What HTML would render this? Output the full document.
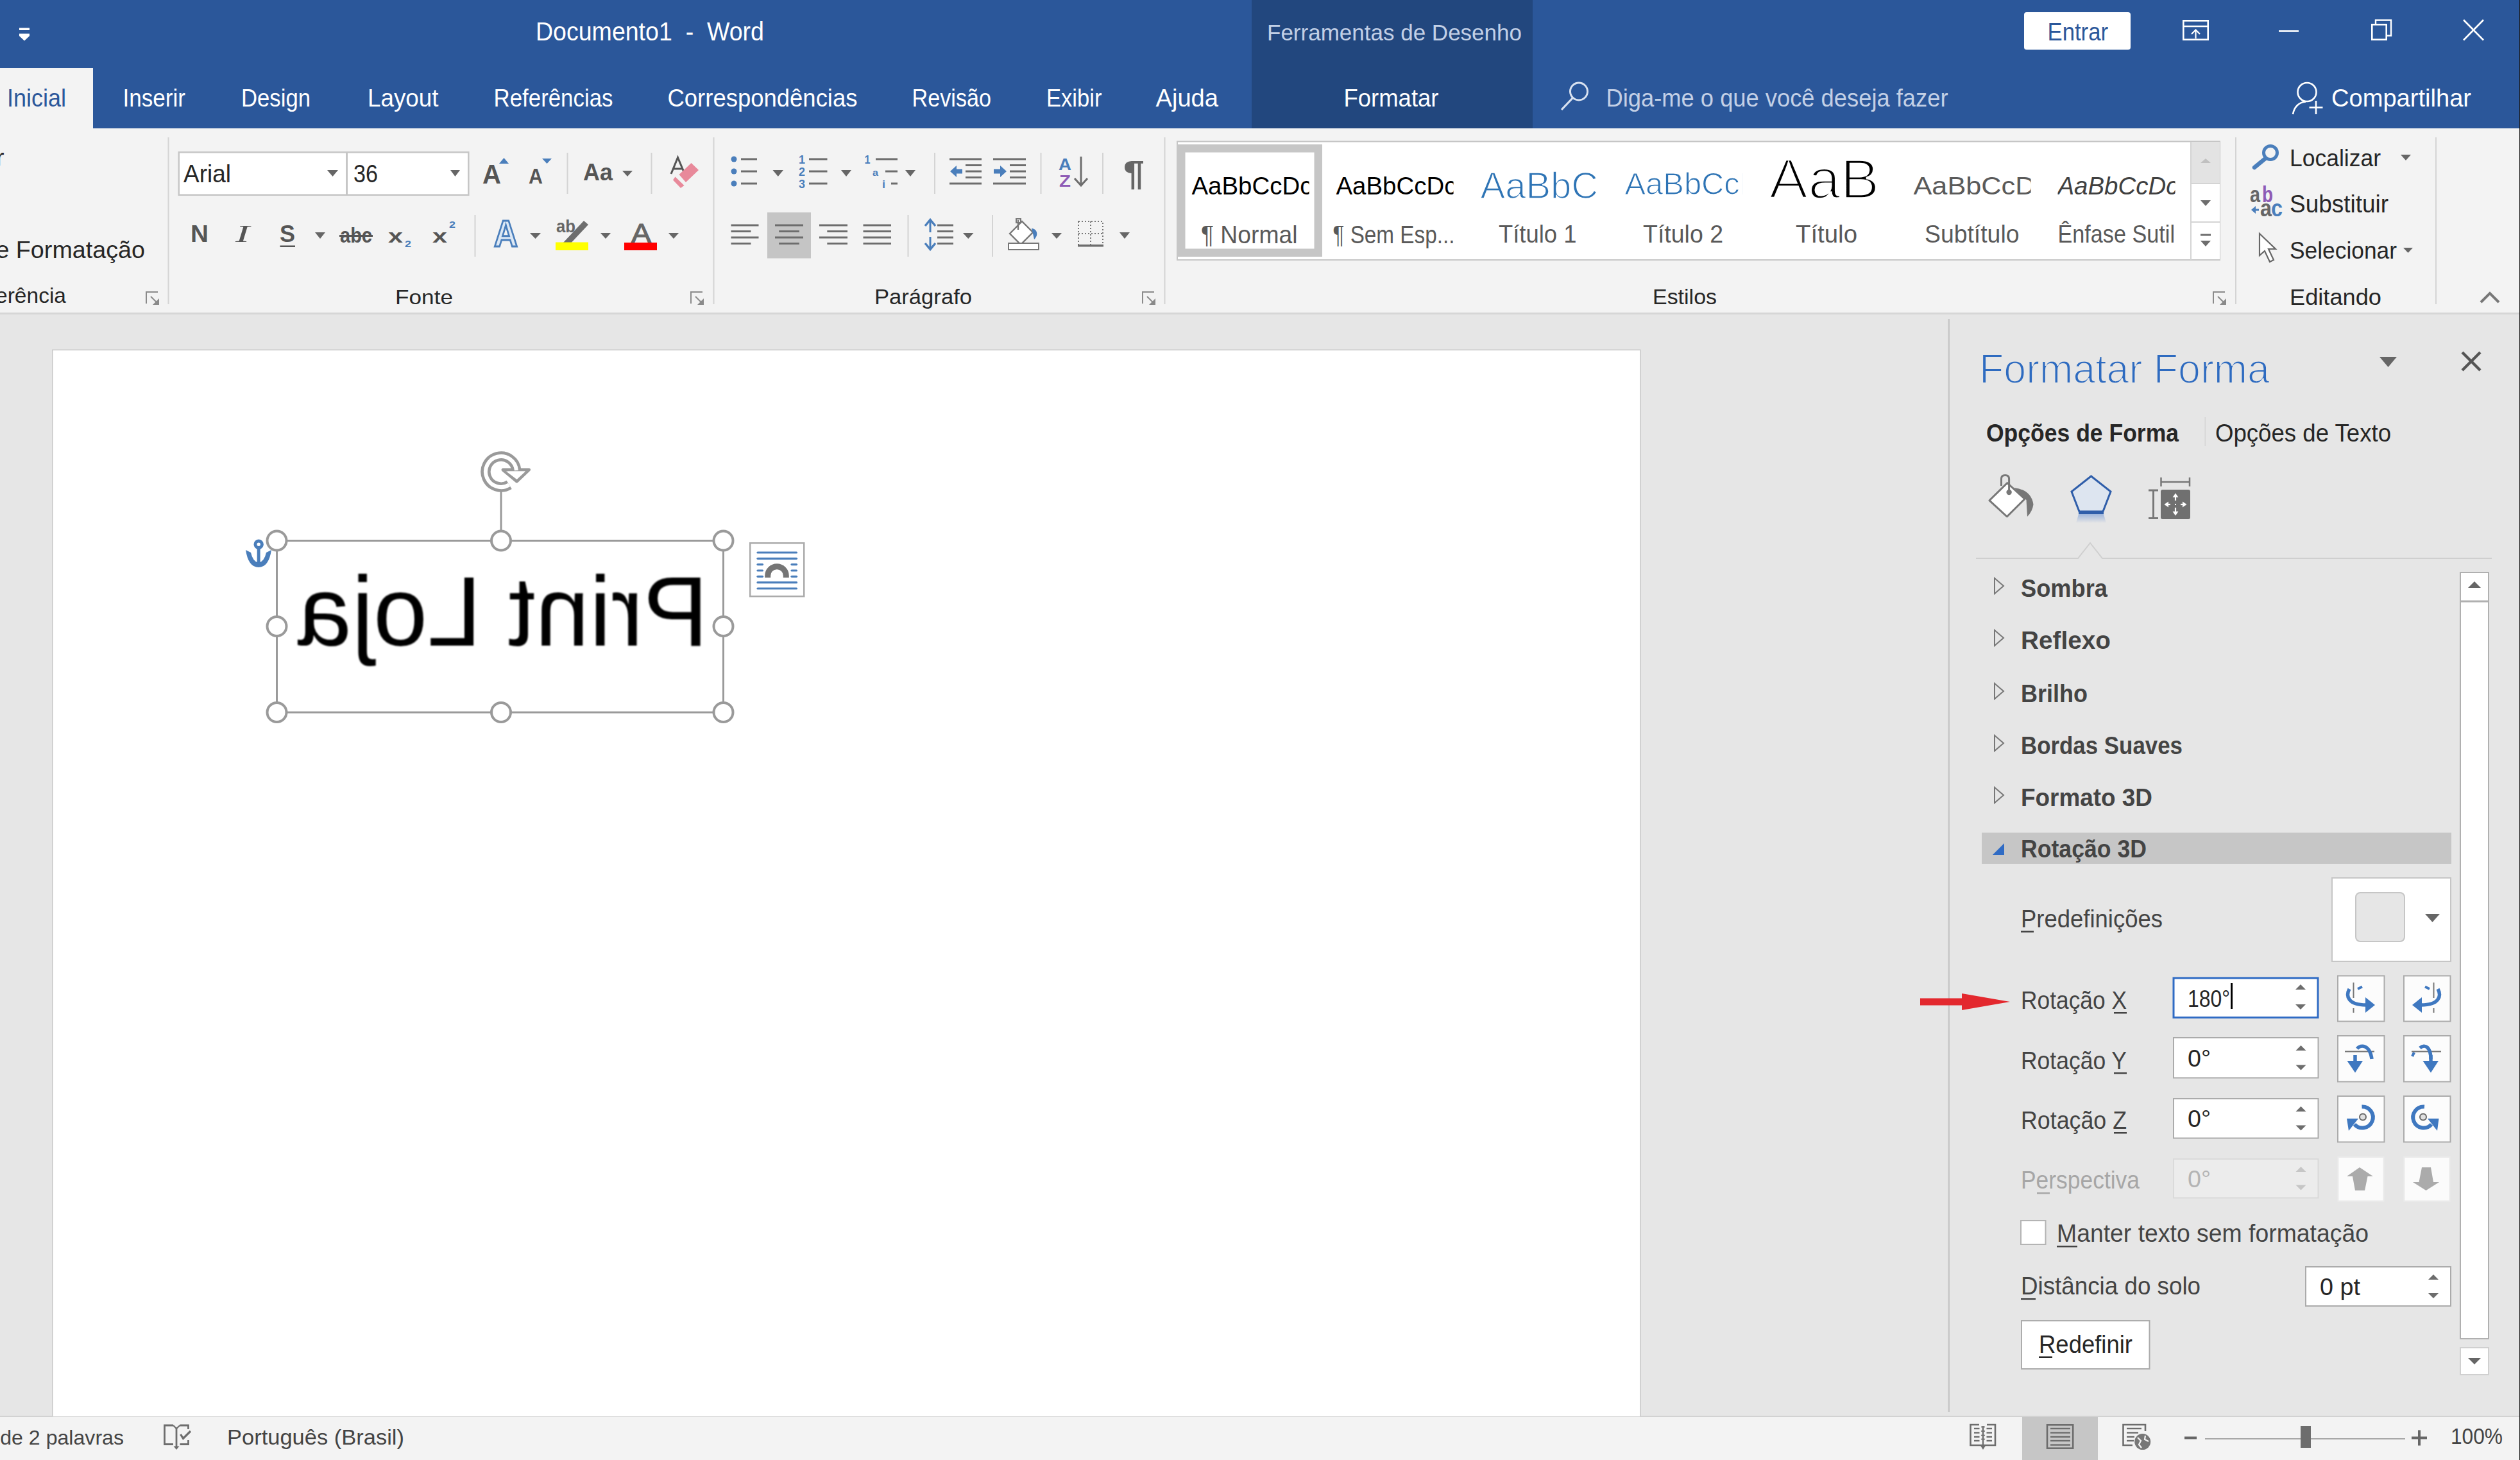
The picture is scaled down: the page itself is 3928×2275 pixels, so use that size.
<!DOCTYPE html>
<html><head><meta charset="utf-8"><title>Documento1 - Word</title>
<style>
html,body{margin:0;padding:0;width:3928px;height:2275px;overflow:hidden;background:#e6e6e6;}
svg{display:block;font-family:"Liberation Sans", sans-serif;}
</style></head><body>
<svg width="3928" height="2275" viewBox="0 0 3928 2275">
<defs>
<filter id="blur1" x="-5%" y="-5%" width="110%" height="110%"><feGaussianBlur stdDeviation="1.2"/></filter>
</defs>
<rect x="0" y="0" width="3928" height="200" fill="#2b579a" />
<rect x="1951" y="0" width="438" height="200" fill="#22477e" />
<rect x="0" y="106" width="145" height="94" fill="#f3f3f3" />
<rect x="0" y="200" width="3928" height="288" fill="#f3f3f3" />
<rect x="0" y="487" width="3928" height="3" fill="#d6d6d6" />
<rect x="0" y="490" width="3928" height="1717" fill="#e6e6e6" />
<rect x="0" y="2207" width="3928" height="68" fill="#f3f3f3" />
<rect x="0" y="2206" width="3928" height="2" fill="#d2d2d2" />
<rect x="30" y="43.5" width="16" height="3.5" fill="#ffffff" />
<rect x="30" y="52.5" width="16" height="3.5" fill="#ffffff" />
<path d="M30,56 L46,56 L38,63.5 Z" fill="#ffffff" />
<text x="835.0" y="63.0" font-size="39.80" fill="#ffffff" textLength="356.0" lengthAdjust="spacingAndGlyphs">Documento1  -  Word</text>
<text x="1975.0" y="62.5" font-size="34.92" fill="#c3d0e6" textLength="397.0" lengthAdjust="spacingAndGlyphs">Ferramentas de Desenho</text>
<rect x="3155" y="19" width="166" height="58.5" rx="4" fill="#ffffff"/>
<text x="3191.5" y="62.5" font-size="38.41" fill="#2b579a" textLength="94.5" lengthAdjust="spacingAndGlyphs">Entrar</text>
<rect x="3403.3" y="32.3" width="38.4" height="29.4" fill="none" stroke="#ffffff" stroke-width="2.6" />
<line x1="3403" y1="41" x2="3442" y2="41" stroke="#ffffff" stroke-width="2.6" />
<line x1="3422.5" y1="60" x2="3422.5" y2="47" stroke="#ffffff" stroke-width="2.2" />
<path d="M3416,53 L3422.5,46.5 L3429,53" fill="none" stroke="#ffffff" stroke-width="2.2" />
<line x1="3552" y1="48.5" x2="3583" y2="48.5" stroke="#ffffff" stroke-width="2.6" />
<path d="M3703,37 L3703,31.5 L3727,31.5 L3727,55.5 L3720.5,55.5" fill="none" stroke="#ffffff" stroke-width="2.4" />
<rect x="3697.3" y="38.3" width="22.4" height="23.4" fill="none" stroke="#ffffff" stroke-width="2.6" />
<line x1="3840" y1="31" x2="3871" y2="62.5" stroke="#ffffff" stroke-width="2.6" />
<line x1="3871" y1="31" x2="3840" y2="62.5" stroke="#ffffff" stroke-width="2.6" />
<text x="11.0" y="165.6" font-size="39.11" fill="#2b579a" textLength="92.0" lengthAdjust="spacingAndGlyphs">Inicial</text>
<text x="191.5" y="165.6" font-size="39.11" fill="#ffffff" textLength="97.5" lengthAdjust="spacingAndGlyphs">Inserir</text>
<text x="376.0" y="165.6" font-size="39.11" fill="#ffffff" textLength="108.0" lengthAdjust="spacingAndGlyphs">Design</text>
<text x="573.0" y="165.6" font-size="39.11" fill="#ffffff" textLength="110.5" lengthAdjust="spacingAndGlyphs">Layout</text>
<text x="769.5" y="165.6" font-size="39.11" fill="#ffffff" textLength="186.0" lengthAdjust="spacingAndGlyphs">Referências</text>
<text x="1040.5" y="165.6" font-size="39.11" fill="#ffffff" textLength="296.0" lengthAdjust="spacingAndGlyphs">Correspondências</text>
<text x="1421.5" y="165.6" font-size="39.11" fill="#ffffff" textLength="123.5" lengthAdjust="spacingAndGlyphs">Revisão</text>
<text x="1631.0" y="165.6" font-size="39.11" fill="#ffffff" textLength="86.5" lengthAdjust="spacingAndGlyphs">Exibir</text>
<text x="1801.5" y="165.6" font-size="39.11" fill="#ffffff" textLength="97.5" lengthAdjust="spacingAndGlyphs">Ajuda</text>
<text x="2094.5" y="165.6" font-size="39.11" fill="#ffffff" textLength="148.0" lengthAdjust="spacingAndGlyphs">Formatar</text>
<circle cx="2461" cy="142.5" r="13.5" fill="none" stroke="#d9e2f0" stroke-width="3"/>
<line x1="2452" y1="152" x2="2434" y2="171" stroke="#d9e2f0" stroke-width="3.2" />
<text x="2503.5" y="165.6" font-size="39.11" fill="#c3d0e6" textLength="533.0" lengthAdjust="spacingAndGlyphs">Diga-me o que você deseja fazer</text>
<circle cx="3596" cy="143.5" r="14.5" fill="none" stroke="#ffffff" stroke-width="2.6"/>
<path d="M3574,178 C3576,166 3584,159 3594,158.5" fill="none" stroke="#ffffff" stroke-width="2.6" />
<line x1="3610" y1="157" x2="3610" y2="178" stroke="#ffffff" stroke-width="2.6" />
<line x1="3599.5" y1="167.5" x2="3620.5" y2="167.5" stroke="#ffffff" stroke-width="2.6" />
<text x="3634.0" y="165.7" font-size="39.11" fill="#ffffff" textLength="218.0" lengthAdjust="spacingAndGlyphs">Compartilhar</text>
<text x="-6.0" y="257.5" font-size="37.71" fill="#262626">r</text>
<text x="226.0" y="402.0" font-size="37.71" fill="#262626" text-anchor="end">de Formatação</text>
<text x="103.0" y="472.0" font-size="33.52" fill="#262626" text-anchor="end">Área de Transferência</text>
<path d="M228,473 L228,455 L246,455" fill="none" stroke="#8a8a8a" stroke-width="2" />
<path d="M235,462 L247,474" fill="none" stroke="#8a8a8a" stroke-width="2" />
<path d="M248,465 L248,475 L238,475 Z" fill="#8a8a8a" />
<rect x="261.5" y="214" width="2.0" height="260" fill="#d4d4d4" />
<rect x="278.75" y="237.25" width="261.5" height="66.5" fill="#ffffff" stroke="#c6c6c6" stroke-width="2.5" />
<rect x="540.75" y="237.25" width="189.5" height="66.5" fill="#ffffff" stroke="#c6c6c6" stroke-width="2.5" />
<text x="286.0" y="284.0" font-size="39.11" fill="#262626" textLength="74.0" lengthAdjust="spacingAndGlyphs">Arial</text>
<path d="M510,265 L527,265 L518.5,275 Z" fill="#666" />
<text x="551.0" y="284.0" font-size="39.11" fill="#262626" textLength="38.0" lengthAdjust="spacingAndGlyphs">36</text>
<path d="M702,265 L717,265 L709.5,275 Z" fill="#666" />
<text x="752.0" y="286.0" font-size="41.90" fill="#555" font-weight="700" textLength="29.0" lengthAdjust="spacingAndGlyphs">A</text>
<path d="M778,255 L793,255 L785.5,246 Z" fill="#4a7ebb" />
<text x="824.0" y="286.0" font-size="32.82" fill="#555" font-weight="700" textLength="22.0" lengthAdjust="spacingAndGlyphs">A</text>
<path d="M845,247 L860,247 L852.5,255 Z" fill="#4a7ebb" />
<rect x="883.5" y="238" width="2.0" height="64" fill="#d4d4d4" />
<text x="909.0" y="281.0" font-size="37.71" fill="#555" font-weight="700" textLength="46.0" lengthAdjust="spacingAndGlyphs">Aa</text>
<path d="M970,266 L986,266 L978.0,275 Z" fill="#666" />
<rect x="1014.5" y="238" width="2.0" height="64" fill="#d4d4d4" />
<path d="M1046,271 L1056.5,245.5 L1066,268 M1050,263 L1063,263" fill="none" stroke="#555" stroke-width="3" />
<path d="M1077.5,254 L1089,265 L1069,284 L1058.5,272 Z" fill="#e8899a" />
<path d="M1052.5,275.5 L1066.5,289 L1061,293 L1049,280.5 Z" fill="#e8899a" />
<text x="297.0" y="377.0" font-size="37.71" fill="#555" font-weight="700" textLength="28.0" lengthAdjust="spacingAndGlyphs">N</text>
<text x="367" y="377" font-size="38" fill="#555" font-family="Liberation Serif" font-style="italic" textLength="22" lengthAdjust="spacingAndGlyphs">I</text>
<text x="436.0" y="377.0" font-size="37.71" fill="#555" font-weight="700" textLength="24.0" lengthAdjust="spacingAndGlyphs">S</text>
<rect x="436.5" y="382.5" width="23.5" height="2.5" fill="#555" />
<path d="M491,362 L507,362 L499.0,372 Z" fill="#666" />
<text x="530.0" y="378.0" font-size="33.52" fill="#555" font-weight="700" textLength="50.0" lengthAdjust="spacingAndGlyphs">abc</text>
<rect x="529" y="366" width="52" height="3" fill="#555" />
<text x="605.0" y="378.0" font-size="29.33" fill="#555" font-weight="700" textLength="23.0" lengthAdjust="spacingAndGlyphs">x</text>
<text x="631.0" y="385.0" font-size="15.36" fill="#4a7ebb" font-weight="700" textLength="10.0" lengthAdjust="spacingAndGlyphs">2</text>
<text x="674.0" y="378.0" font-size="29.33" fill="#555" font-weight="700" textLength="23.0" lengthAdjust="spacingAndGlyphs">x</text>
<text x="700.0" y="355.0" font-size="15.36" fill="#4a7ebb" font-weight="700" textLength="10.0" lengthAdjust="spacingAndGlyphs">2</text>
<rect x="739.5" y="335" width="2.0" height="65" fill="#d4d4d4" />
<text x="770" y="384" font-size="58" fill="#dce8f5" stroke="#4a7ebb" stroke-width="3" font-weight="700" textLength="37" lengthAdjust="spacingAndGlyphs">A</text>
<path d="M826,363 L843,363 L834.5,372 Z" fill="#666" />
<text x="867.0" y="362.0" font-size="27.93" fill="#666" font-weight="700" textLength="30.0" lengthAdjust="spacingAndGlyphs">ab</text>
<path d="M878,378 L910,344 L917,350 L885,384 Z" fill="#6d6d6d" />
<rect x="866" y="377.5" width="51" height="12.5" fill="#ffff00" />
<path d="M936,363 L952,363 L944.0,372 Z" fill="#666" />
<text x="984.0" y="377.5" font-size="42.60" fill="#666" textLength="31.0" lengthAdjust="spacingAndGlyphs" stroke="#666" stroke-width="1.2">A</text>
<rect x="973" y="378" width="51" height="12" fill="#ff0000" />
<path d="M1042,363 L1058,363 L1050.0,372 Z" fill="#666" />
<text x="616.0" y="474.0" font-size="32.12" fill="#262626" textLength="90.0" lengthAdjust="spacingAndGlyphs">Fonte</text>
<path d="M1077,473 L1077,455 L1095,455" fill="none" stroke="#8a8a8a" stroke-width="2" />
<path d="M1084,462 L1096,474" fill="none" stroke="#8a8a8a" stroke-width="2" />
<path d="M1097,465 L1097,475 L1087,475 Z" fill="#8a8a8a" />
<rect x="1111.5" y="214" width="2.0" height="260" fill="#d4d4d4" />
<circle cx="1144" cy="248" r="4.5" fill="#4a7ebb"/>
<rect x="1155" y="246.5" width="25" height="3.0" fill="#6d6d6d" />
<circle cx="1144" cy="267" r="4.5" fill="#4a7ebb"/>
<rect x="1155" y="265.5" width="25" height="3.0" fill="#6d6d6d" />
<circle cx="1144" cy="286" r="4.5" fill="#4a7ebb"/>
<rect x="1155" y="284.5" width="25" height="3.0" fill="#6d6d6d" />
<path d="M1204.5,265 L1221,265 L1212.75,275 Z" fill="#666" />
<text x="1245.0" y="255.0" font-size="18.16" fill="#4a7ebb" font-weight="700" textLength="10.0" lengthAdjust="spacingAndGlyphs">1</text>
<rect x="1261" y="246.5" width="28.5" height="3.0" fill="#6d6d6d" />
<text x="1245.0" y="274.0" font-size="18.16" fill="#4a7ebb" font-weight="700" textLength="10.0" lengthAdjust="spacingAndGlyphs">2</text>
<rect x="1261" y="265.5" width="28.5" height="3.0" fill="#6d6d6d" />
<text x="1245.0" y="293.0" font-size="18.16" fill="#4a7ebb" font-weight="700" textLength="10.0" lengthAdjust="spacingAndGlyphs">3</text>
<rect x="1261" y="284.5" width="28.5" height="3.0" fill="#6d6d6d" />
<path d="M1311,265 L1327,265 L1319.0,275 Z" fill="#666" />
<text x="1347.5" y="255.0" font-size="18.16" fill="#4a7ebb" font-weight="700" textLength="9.0" lengthAdjust="spacingAndGlyphs">1</text>
<rect x="1365" y="246.5" width="34" height="3.0" fill="#6d6d6d" />
<text x="1360.0" y="274.0" font-size="13.97" fill="#4a7ebb" font-weight="700" textLength="9.0" lengthAdjust="spacingAndGlyphs">a</text>
<rect x="1380" y="265.5" width="19" height="3.0" fill="#6d6d6d" />
<text x="1375.0" y="293.0" font-size="16.76" fill="#4a7ebb" font-weight="700" textLength="5.0" lengthAdjust="spacingAndGlyphs">i</text>
<rect x="1389" y="284.5" width="10" height="3.0" fill="#6d6d6d" />
<path d="M1411,265 L1427,265 L1419.0,275 Z" fill="#666" />
<rect x="1456" y="238" width="2" height="64" fill="#d4d4d4" />
<rect x="1480" y="246.5" width="50" height="3.0" fill="#6d6d6d" />
<rect x="1505" y="256" width="25" height="3" fill="#6d6d6d" />
<rect x="1505" y="265.5" width="25" height="3.0" fill="#6d6d6d" />
<rect x="1505" y="275" width="25" height="3" fill="#6d6d6d" />
<rect x="1480" y="284.5" width="50" height="3.0" fill="#6d6d6d" />
<path d="M1481,267 L1491,258 L1491,263.5 L1500,263.5 L1500,270.5 L1491,270.5 L1491,276 Z" fill="#4a7ebb" />
<rect x="1548" y="246.5" width="51" height="3.0" fill="#6d6d6d" />
<rect x="1574" y="256" width="25" height="3" fill="#6d6d6d" />
<rect x="1574" y="265.5" width="25" height="3.0" fill="#6d6d6d" />
<rect x="1574" y="275" width="25" height="3" fill="#6d6d6d" />
<rect x="1548" y="284.5" width="51" height="3.0" fill="#6d6d6d" />
<path d="M1569,267 L1559,258 L1559,263.5 L1549,263.5 L1549,270.5 L1559,270.5 L1559,276 Z" fill="#4a7ebb" />
<rect x="1621.5" y="238" width="2.0" height="64" fill="#d4d4d4" />
<text x="1650.0" y="265.0" font-size="25.14" fill="#4a7ebb" font-weight="700" textLength="20.0" lengthAdjust="spacingAndGlyphs">A</text>
<text x="1651.0" y="291.0" font-size="25.14" fill="#8e5bb5" font-weight="700" textLength="18.0" lengthAdjust="spacingAndGlyphs">Z</text>
<line x1="1685" y1="244" x2="1685" y2="289" stroke="#6d6d6d" stroke-width="3" />
<path d="M1675,278 L1685,289 L1695,278" fill="none" stroke="#6d6d6d" stroke-width="3" />
<rect x="1718" y="238" width="2" height="64" fill="#d4d4d4" />
<text x="1751.0" y="287.5" font-size="53.07" fill="#666" font-weight="700" textLength="33.0" lengthAdjust="spacingAndGlyphs">¶</text>
<rect x="1196" y="331" width="68" height="71.5" fill="#c5c5c5" />
<rect x="1139.5" y="349.5" width="43.0" height="3.0" fill="#6d6d6d" />
<rect x="1139.5" y="359.0" width="30.960000000000036" height="3.0" fill="#6d6d6d" />
<rect x="1139.5" y="368.5" width="43.0" height="3.0" fill="#6d6d6d" />
<rect x="1139.5" y="378.0" width="30.960000000000036" height="3.0" fill="#6d6d6d" />
<rect x="1208" y="349.5" width="44" height="3.0" fill="#6d6d6d" />
<rect x="1214.16" y="359.0" width="31.679999999999836" height="3.0" fill="#6d6d6d" />
<rect x="1208" y="368.5" width="44" height="3.0" fill="#6d6d6d" />
<rect x="1214.16" y="378.0" width="31.679999999999836" height="3.0" fill="#6d6d6d" />
<rect x="1277" y="349.5" width="44" height="3.0" fill="#6d6d6d" />
<rect x="1289.32" y="359.0" width="31.680000000000064" height="3.0" fill="#6d6d6d" />
<rect x="1277" y="368.5" width="44" height="3.0" fill="#6d6d6d" />
<rect x="1289.32" y="378.0" width="31.680000000000064" height="3.0" fill="#6d6d6d" />
<rect x="1345.5" y="349.5" width="43.5" height="3.0" fill="#6d6d6d" />
<rect x="1345.5" y="359.0" width="43.5" height="3.0" fill="#6d6d6d" />
<rect x="1345.5" y="368.5" width="43.5" height="3.0" fill="#6d6d6d" />
<rect x="1345.5" y="378.0" width="43.5" height="3.0" fill="#6d6d6d" />
<rect x="1414.5" y="335" width="2.0" height="65" fill="#d4d4d4" />
<line x1="1450" y1="344" x2="1450" y2="362" stroke="#4a7ebb" stroke-width="3" />
<line x1="1450" y1="369" x2="1450" y2="388" stroke="#4a7ebb" stroke-width="3" />
<path d="M1442,352 L1450,342.5 L1458,352" fill="none" stroke="#4a7ebb" stroke-width="3.4" />
<path d="M1442,379 L1450,388.5 L1458,379" fill="none" stroke="#4a7ebb" stroke-width="3.4" />
<rect x="1461" y="349.5" width="25" height="3.0" fill="#6d6d6d" />
<rect x="1461" y="359.0" width="25" height="3.0" fill="#6d6d6d" />
<rect x="1461" y="368.5" width="25" height="3.0" fill="#6d6d6d" />
<rect x="1461" y="378.0" width="25" height="3.0" fill="#6d6d6d" />
<path d="M1501,363 L1517.5,363 L1509.25,372 Z" fill="#666" />
<rect x="1546" y="335" width="2" height="65" fill="#d4d4d4" />
<path d="M1574,364 L1593,345 L1610,362 L1591,381 Z" fill="#ffffff" stroke="#777" stroke-width="2.4" />
<path d="M1587,343 L1587,358" fill="none" stroke="#777" stroke-width="2.4" />
<rect x="1584" y="341" width="7" height="6" fill="none" stroke="#777" stroke-width="2"/>
<path d="M1608,356 C1616,356 1620,366 1612,373 L1610,364 Z" fill="#4a7ebb" />
<rect x="1572.0" y="379.0" width="47" height="10" fill="#ffffff" stroke="#777" stroke-width="2" />
<path d="M1639,363 L1655,363 L1647.0,372 Z" fill="#666" />
<rect x="1681" y="345" width="38" height="38" fill="none" stroke="#777" stroke-width="2" stroke-dasharray="2,3"/>
<line x1="1700" y1="345" x2="1700" y2="383" stroke="#777" stroke-width="2" stroke-dasharray="2,3"/>
<line x1="1681" y1="364" x2="1719" y2="364" stroke="#777" stroke-width="2" stroke-dasharray="2,3"/>
<rect x="1680" y="381" width="40" height="3.5" fill="#6d6d6d" />
<path d="M1745,362 L1761,362 L1753.0,372 Z" fill="#666" />
<text x="1363.0" y="474.0" font-size="33.52" fill="#262626" textLength="152.0" lengthAdjust="spacingAndGlyphs">Parágrafo</text>
<path d="M1781,473 L1781,455 L1799,455" fill="none" stroke="#8a8a8a" stroke-width="2" />
<path d="M1788,462 L1800,474" fill="none" stroke="#8a8a8a" stroke-width="2" />
<path d="M1801,465 L1801,475 L1791,475 Z" fill="#8a8a8a" />
<rect x="1814.5" y="214" width="2.0" height="260" fill="#d4d4d4" />
<rect x="1835.0" y="220.5" width="1625" height="184.5" fill="#ffffff" stroke="#c6c6c6" stroke-width="2" />
<rect x="1841.25" y="231.25" width="213.5" height="162.5" fill="none" stroke="#c6c6c6" stroke-width="12.5" />
<svg x="1857.5" y="228" width="183" height="110" overflow="hidden">
<text x="0.0" y="74.5" font-size="38.41" fill="#000">AaBbCcDc</text>
</svg>
<text x="1872.0" y="379.0" font-size="39.11" fill="#595959" textLength="150.5" lengthAdjust="spacingAndGlyphs">¶ Normal</text>
<svg x="2082.5" y="228" width="183" height="110" overflow="hidden">
<text x="0.0" y="74.5" font-size="38.41" fill="#000">AaBbCcDc</text>
</svg>
<text x="2077.5" y="379.0" font-size="39.11" fill="#595959" textLength="190.0" lengthAdjust="spacingAndGlyphs">¶ Sem Esp...</text>
<svg x="2307.5" y="228" width="183" height="110" overflow="hidden">
<text x="0.0" y="81.0" font-size="57.96" fill="#2e74b5" stroke="#ffffff" stroke-width="1.6">AaBbCc</text>
</svg>
<text x="2336.0" y="378.0" font-size="39.11" fill="#595959" textLength="121.5" lengthAdjust="spacingAndGlyphs">Título 1</text>
<svg x="2532.5" y="228" width="183" height="110" overflow="hidden">
<text x="0.0" y="74.5" font-size="48.88" fill="#2e74b5" stroke="#ffffff" stroke-width="1.2">AaBbCcD</text>
</svg>
<text x="2561.0" y="378.0" font-size="39.11" fill="#595959" textLength="125.0" lengthAdjust="spacingAndGlyphs">Título 2</text>
<svg x="2757.5" y="228" width="180" height="110" overflow="hidden">
<text x="0.0" y="81.0" font-size="87.99" fill="#000" textLength="172.0" lengthAdjust="spacingAndGlyphs" stroke="#ffffff" stroke-width="3.5">AaB</text>
</svg>
<text x="2799.0" y="378.0" font-size="39.11" fill="#595959" textLength="96.0" lengthAdjust="spacingAndGlyphs">Título</text>
<svg x="2982.5" y="228" width="183" height="110" overflow="hidden">
<text x="0.0" y="74.5" font-size="38.41" fill="#5a5a5a" textLength="190.0" lengthAdjust="spacingAndGlyphs">AaBbCcD</text>
</svg>
<text x="3000.0" y="378.0" font-size="39.11" fill="#595959" textLength="147.5" lengthAdjust="spacingAndGlyphs">Subtítulo</text>
<svg x="3207.5" y="228" width="183" height="110" overflow="hidden">
<text x="0.0" y="74.5" font-size="38.41" fill="#404040" font-style="italic">AaBbCcDc</text>
</svg>
<text x="3207.5" y="378.0" font-size="39.11" fill="#595959" textLength="182.5" lengthAdjust="spacingAndGlyphs">Ênfase Sutil</text>
<rect x="3415" y="221" width="45" height="183" fill="#ffffff" />
<line x1="3415" y1="221" x2="3415" y2="405" stroke="#d4d4d4" stroke-width="2" />
<rect x="3416" y="221" width="44" height="64" fill="#e3e3e3" />
<line x1="3416" y1="286" x2="3460" y2="286" stroke="#d4d4d4" stroke-width="2" />
<line x1="3416" y1="346" x2="3460" y2="346" stroke="#d4d4d4" stroke-width="2" />
<path d="M3430,254 L3446,254 L3438.0,247 Z" fill="#c0c0c0" />
<path d="M3430,312 L3446,312 L3438.0,321 Z" fill="#6d6d6d" />
<rect x="3430" y="364.5" width="16" height="3.0" fill="#6d6d6d" />
<path d="M3430,375 L3446,375 L3438.0,384 Z" fill="#6d6d6d" />
<text x="2576.0" y="474.0" font-size="33.52" fill="#262626" textLength="100.0" lengthAdjust="spacingAndGlyphs">Estilos</text>
<path d="M3450,473 L3450,455 L3468,455" fill="none" stroke="#8a8a8a" stroke-width="2" />
<path d="M3457,462 L3469,474" fill="none" stroke="#8a8a8a" stroke-width="2" />
<path d="M3470,465 L3470,475 L3460,475 Z" fill="#8a8a8a" />
<rect x="3484" y="214" width="2" height="260" fill="#d4d4d4" />
<circle cx="3539" cy="238" r="10.5" fill="none" stroke="#4a7ebb" stroke-width="5"/>
<line x1="3531" y1="247" x2="3514" y2="261" stroke="#4a7ebb" stroke-width="6.5" stroke-linecap="round"/>
<text x="3569.0" y="259.0" font-size="37.71" fill="#262626" textLength="142.0" lengthAdjust="spacingAndGlyphs">Localizar</text>
<path d="M3742,241 L3758,241 L3750.0,250 Z" fill="#666" />
<text x="3507.0" y="315.0" font-size="34.92" fill="#666" font-weight="700" textLength="16.0" lengthAdjust="spacingAndGlyphs">a</text>
<text x="3526.0" y="315.0" font-size="34.92" fill="#8e5bb5" font-weight="700" textLength="17.0" lengthAdjust="spacingAndGlyphs">b</text>
<text x="3523.0" y="337.0" font-size="36.31" fill="#666" font-weight="700" textLength="18.0" lengthAdjust="spacingAndGlyphs">a</text>
<text x="3540.0" y="337.0" font-size="36.31" fill="#4a7ebb" font-weight="700" textLength="18.0" lengthAdjust="spacingAndGlyphs">c</text>
<path d="M3509,327 L3516,321 L3516,333 Z" fill="#4a7ebb" />
<rect x="3514" y="325.5" width="7" height="3.0" fill="#4a7ebb" />
<text x="3569.0" y="331.0" font-size="38.41" fill="#262626" textLength="154.0" lengthAdjust="spacingAndGlyphs">Substituir</text>
<path d="M3522,364 L3522,398 L3530,391 L3538,408 L3544,405 L3536,388 L3547,388 Z" fill="#ffffff" stroke="#666" stroke-width="2.2" />
<text x="3569.0" y="402.5" font-size="37.71" fill="#262626" textLength="167.0" lengthAdjust="spacingAndGlyphs">Selecionar</text>
<path d="M3746,386 L3761,386 L3753.5,394 Z" fill="#666" />
<text x="3569.0" y="475.0" font-size="34.92" fill="#262626" textLength="143.0" lengthAdjust="spacingAndGlyphs">Editando</text>
<rect x="3796" y="214" width="2" height="260" fill="#d4d4d4" />
<path d="M3867,471 L3881,457 L3895,471" fill="none" stroke="#777" stroke-width="4" />
<rect x="81" y="544.5" width="2476.5" height="1662.5" fill="#c8c8c8" />
<rect x="82.5" y="546" width="2473.5" height="1661" fill="#ffffff" />
<rect x="431.5" y="842.5" width="696" height="267.5" fill="none" stroke="#9a9a9a" stroke-width="3" />
<line x1="781" y1="765" x2="781" y2="826" stroke="#9a9a9a" stroke-width="3" />
<circle cx="431.5" cy="842.5" r="15" fill="#ffffff" stroke="#9a9a9a" stroke-width="4"/>
<circle cx="431.5" cy="1110" r="15" fill="#ffffff" stroke="#9a9a9a" stroke-width="4"/>
<circle cx="781" cy="842.5" r="15" fill="#ffffff" stroke="#9a9a9a" stroke-width="4"/>
<circle cx="781" cy="1110" r="15" fill="#ffffff" stroke="#9a9a9a" stroke-width="4"/>
<circle cx="1127.5" cy="842.5" r="15" fill="#ffffff" stroke="#9a9a9a" stroke-width="4"/>
<circle cx="1127.5" cy="1110" r="15" fill="#ffffff" stroke="#9a9a9a" stroke-width="4"/>
<circle cx="431.5" cy="976" r="15" fill="#ffffff" stroke="#9a9a9a" stroke-width="4"/>
<circle cx="1127.5" cy="976" r="15" fill="#ffffff" stroke="#9a9a9a" stroke-width="4"/>
<path d="M804.9,732.9 A24,24 0 1 0 793.7,755.4" fill="none" stroke="#9a9a9a" stroke-width="15.4" />
<path d="M784,732 L824.5,732 L805.6,750 Z" fill="#ffffff" stroke="#9a9a9a" stroke-width="5" stroke-linejoin="round"/>
<path d="M804.9,732.9 A24,24 0 1 0 793.7,755.4" fill="none" stroke="#ffffff" stroke-width="6" />
<path d="M789,734.5 L819,734.5 L805.6,747 Z" fill="#ffffff" />
<circle cx="403.2" cy="848.2" r="5.2" fill="none" stroke="#4a7ebb" stroke-width="5"/>
<rect x="400.7" y="853" width="4.900000000000034" height="27" fill="#4a7ebb" />
<path d="M383,857 L391,861 Q394,875 403,877 Q412,875 415,861 L423,857 Q419,884 403,884 Q387,884 383,857 Z" fill="#4a7ebb" />
<rect x="1169.25" y="846.25" width="84.0" height="83.0" fill="#ffffff" stroke="#ababab" stroke-width="2.5" />
<line x1="1181" y1="861" x2="1241.5" y2="861" stroke="#4a7ebb" stroke-width="3.2" stroke-linecap="round"/>
<line x1="1181" y1="870.3" x2="1241.5" y2="870.3" stroke="#4a7ebb" stroke-width="3.2" stroke-linecap="round"/>
<line x1="1181" y1="907.7" x2="1241.5" y2="907.7" stroke="#4a7ebb" stroke-width="3.2" stroke-linecap="round"/>
<line x1="1181" y1="917" x2="1241.5" y2="917" stroke="#4a7ebb" stroke-width="3.2" stroke-linecap="round"/>
<line x1="1181" y1="879.6" x2="1188.5" y2="879.6" stroke="#4a7ebb" stroke-width="3.2" stroke-linecap="round"/>
<line x1="1234" y1="879.6" x2="1241.5" y2="879.6" stroke="#4a7ebb" stroke-width="3.2" stroke-linecap="round"/>
<line x1="1181" y1="889" x2="1188.5" y2="889" stroke="#4a7ebb" stroke-width="3.2" stroke-linecap="round"/>
<line x1="1234" y1="889" x2="1241.5" y2="889" stroke="#4a7ebb" stroke-width="3.2" stroke-linecap="round"/>
<line x1="1181" y1="898.3" x2="1188.5" y2="898.3" stroke="#4a7ebb" stroke-width="3.2" stroke-linecap="round"/>
<line x1="1234" y1="898.3" x2="1241.5" y2="898.3" stroke="#4a7ebb" stroke-width="3.2" stroke-linecap="round"/>
<path d="M1196.7,900 L1196.7,897 A14.3,14.3 0 0 1 1225.3,897 L1225.3,900" fill="none" stroke="#757575" stroke-width="9"/>
<g filter="url(#blur1)"><text x="0" y="1006" font-size="153.5" fill="#000" textLength="640" lengthAdjust="spacingAndGlyphs" transform="translate(1104,0) scale(-1,1)">Print Loja</text></g>
<text x="193.0" y="2251.0" font-size="32.12" fill="#444" text-anchor="end">2 de 2 palavras</text>
<path d="M270,2221 L256.5,2221 L256.5,2250.5 L270,2250.5" fill="none" stroke="#6d6d6d" stroke-width="2.8" />
<path d="M280.5,2221 L293.5,2221 L293.5,2227" fill="none" stroke="#6d6d6d" stroke-width="2.8" />
<path d="M293.5,2244 L293.5,2250.5 L280.5,2250.5" fill="none" stroke="#6d6d6d" stroke-width="2.8" />
<path d="M270,2221 L275,2226 L280.5,2221" fill="none" stroke="#6d6d6d" stroke-width="2.2" />
<line x1="275" y1="2225" x2="275" y2="2255" stroke="#6d6d6d" stroke-width="2.8" />
<path d="M270.5,2253.5 L279.5,2253.5 L275,2259 Z" fill="#6d6d6d" />
<path d="M281.5,2235 L285.5,2241.5 L297,2230" fill="none" stroke="#6d6d6d" stroke-width="3.2" />
<text x="354.0" y="2251.0" font-size="32.82" fill="#444" textLength="276.0" lengthAdjust="spacingAndGlyphs">Português (Brasil)</text>
<rect x="3152" y="2208" width="118" height="67" fill="#c6c6c6" />
<path d="M3085,2220 L3071.5,2220 L3071.5,2252 L3110,2252 L3110,2220 L3097,2220" fill="none" stroke="#6d6d6d" stroke-width="2.6" />
<line x1="3077" y1="2226" x2="3085.5" y2="2226" stroke="#6d6d6d" stroke-width="2.4" />
<line x1="3096.5" y1="2226" x2="3105" y2="2226" stroke="#6d6d6d" stroke-width="2.4" />
<line x1="3088" y1="2223.5" x2="3094" y2="2223.5" stroke="#6d6d6d" stroke-width="1.6" />
<line x1="3077" y1="2232.5" x2="3085.5" y2="2232.5" stroke="#6d6d6d" stroke-width="2.4" />
<line x1="3096.5" y1="2232.5" x2="3105" y2="2232.5" stroke="#6d6d6d" stroke-width="2.4" />
<line x1="3088" y1="2230.0" x2="3094" y2="2230.0" stroke="#6d6d6d" stroke-width="1.6" />
<line x1="3077" y1="2239" x2="3085.5" y2="2239" stroke="#6d6d6d" stroke-width="2.4" />
<line x1="3096.5" y1="2239" x2="3105" y2="2239" stroke="#6d6d6d" stroke-width="2.4" />
<line x1="3088" y1="2236.5" x2="3094" y2="2236.5" stroke="#6d6d6d" stroke-width="1.6" />
<line x1="3077" y1="2245" x2="3085.5" y2="2245" stroke="#6d6d6d" stroke-width="2.4" />
<line x1="3096.5" y1="2245" x2="3105" y2="2245" stroke="#6d6d6d" stroke-width="2.4" />
<line x1="3088" y1="2242.5" x2="3094" y2="2242.5" stroke="#6d6d6d" stroke-width="1.6" />
<line x1="3091" y1="2222" x2="3091" y2="2254" stroke="#6d6d6d" stroke-width="2.4" />
<path d="M3086,2251 L3096,2251 L3091,2259 Z" fill="#6d6d6d" />
<rect x="3191.0" y="2220.3" width="40.20000000000018" height="36.4" fill="none" stroke="#6d6d6d" stroke-width="2.6" />
<line x1="3196" y1="2226" x2="3227" y2="2226" stroke="#6d6d6d" stroke-width="2.4" />
<line x1="3196" y1="2232.5" x2="3227" y2="2232.5" stroke="#6d6d6d" stroke-width="2.4" />
<line x1="3196" y1="2239" x2="3227" y2="2239" stroke="#6d6d6d" stroke-width="2.4" />
<line x1="3196" y1="2245" x2="3227" y2="2245" stroke="#6d6d6d" stroke-width="2.4" />
<line x1="3196" y1="2251.5" x2="3227" y2="2251.5" stroke="#6d6d6d" stroke-width="2.4" />
<path d="M3324,2252 L3309.5,2252 L3309.5,2220 L3344,2220 L3344,2230" fill="none" stroke="#6d6d6d" stroke-width="2.6" />
<line x1="3315" y1="2226" x2="3338" y2="2226" stroke="#6d6d6d" stroke-width="2.4" />
<line x1="3315" y1="2232.5" x2="3333" y2="2232.5" stroke="#6d6d6d" stroke-width="2.4" />
<line x1="3315" y1="2239" x2="3327" y2="2239" stroke="#6d6d6d" stroke-width="2.4" />
<line x1="3315" y1="2245" x2="3326" y2="2245" stroke="#6d6d6d" stroke-width="2.4" />
<circle cx="3339.7" cy="2246.6" r="12.5" fill="#777"/>
<path d="M3332,2240 L3337,2245 L3334,2251 L3338,2256 M3344,2237 L3343,2243 L3349,2246" stroke="#f3f3f3" stroke-width="2.2" fill="none"/>
<rect x="3405" y="2238.5" width="19" height="4.0" fill="#666" />
<rect x="3437" y="2241" width="312" height="2" fill="#a8a8a8" />
<rect x="3586" y="2222" width="16" height="34" fill="#6d6d6d" />
<rect x="3759" y="2238.5" width="24" height="4.0" fill="#666" />
<rect x="3769" y="2228.5" width="4" height="24.0" fill="#666" />
<text x="3820.0" y="2250.0" font-size="34.92" fill="#444" textLength="81.0" lengthAdjust="spacingAndGlyphs">100%</text>
<rect x="3036.5" y="497" width="2.5" height="1703" fill="#c6c6c6" />
<text x="3085.0" y="597.0" font-size="65.64" fill="#2e6bc0" textLength="453.0" lengthAdjust="spacingAndGlyphs" stroke="#e6e6e6" stroke-width="2">Formatar Forma</text>
<path d="M3709,556 L3736,556 L3722.5,572 Z" fill="#666" />
<line x1="3838" y1="549" x2="3866" y2="577" stroke="#555" stroke-width="4.5" />
<line x1="3866" y1="549" x2="3838" y2="577" stroke="#555" stroke-width="4.5" />
<text x="3096.0" y="688.0" font-size="38.41" fill="#262626" font-weight="700" textLength="300.0" lengthAdjust="spacingAndGlyphs">Opções de Forma</text>
<rect x="3436.5" y="650" width="1.5" height="45" fill="#d6d6d6" />
<text x="3453.0" y="688.0" font-size="38.41" fill="#262626" textLength="274.0" lengthAdjust="spacingAndGlyphs">Opções de Texto</text>
<path d="M3139,760 Q3166,763 3169.5,786 Q3168,797 3160,805 L3158.5,779 Z" fill="#777" />
<path d="M3128.8,752.5 L3156,777.5 L3128.3,805 L3101,779.8 Z" fill="#ffffff" stroke="#777" stroke-width="3" stroke-linejoin="round"/>
<path d="M3119.5,757 L3119.5,746 Q3119.5,740.5 3125.5,740.5 Q3131.6,740.5 3131.6,746 L3131.6,766" fill="none" stroke="#777" stroke-width="3" />
<circle cx="3131.6" cy="767" r="4.2" fill="#777"/>
<path d="M3259.5,742 L3290,766 L3278,797 L3241,797 L3229,766 Z" fill="#dde5f0" stroke="#2f5eaa" stroke-width="3" />
<rect x="3240" y="796" width="39" height="5" fill="#2f5eaa" />
<linearGradient id="pglow" x1="0" y1="0" x2="0" y2="1"><stop offset="0" stop-color="#9fb6dc"/><stop offset="1" stop-color="#e6e6e6"/></linearGradient>
<path d="M3240,801 L3279,801 L3283,815 L3236,815 Z" fill="url(#pglow)"/>
<line x1="3356.5" y1="764" x2="3356.5" y2="808" stroke="#777" stroke-width="3" />
<line x1="3349" y1="764" x2="3364" y2="764" stroke="#777" stroke-width="3" />
<line x1="3349" y1="807.5" x2="3364" y2="807.5" stroke="#777" stroke-width="3" />
<line x1="3368.5" y1="751" x2="3413" y2="751" stroke="#777" stroke-width="2.5" />
<line x1="3368.5" y1="744" x2="3368.5" y2="758" stroke="#777" stroke-width="2.5" />
<line x1="3413" y1="744" x2="3413" y2="758" stroke="#777" stroke-width="2.5" />
<rect x="3368" y="763" width="46" height="46" rx="3" fill="#707070"/>
<line x1="3391" y1="772" x2="3391" y2="780" stroke="#ffffff" stroke-width="2.2" />
<line x1="3391" y1="791" x2="3391" y2="799" stroke="#ffffff" stroke-width="2.2" />
<line x1="3375" y1="786" x2="3383" y2="786" stroke="#ffffff" stroke-width="2.2" />
<line x1="3399" y1="786" x2="3407" y2="786" stroke="#ffffff" stroke-width="2.2" />
<rect x="3390" y="785" width="2" height="2" fill="#ffffff" />
<path d="M3386.5,775 L3391,768.5 L3395.5,775 Z M3386.5,797 L3391,803.5 L3395.5,797 Z M3380,781.5 L3373.5,786 L3380,790.5 Z M3402,781.5 L3408.5,786 L3402,790.5 Z" fill="#ffffff" />
<path d="M3080,870 L3239,870 L3258,846 L3277,870 L3884,870" fill="none" stroke="#cfcfcf" stroke-width="2" />
<path d="M3109,901 L3123,913 L3109,925 Z" fill="none" stroke="#777" stroke-width="2" />
<text x="3150.0" y="930.0" font-size="38.41" fill="#444" font-weight="700" textLength="135.0" lengthAdjust="spacingAndGlyphs">Sombra</text>
<path d="M3109,982 L3123,994 L3109,1006 Z" fill="none" stroke="#777" stroke-width="2" />
<text x="3150.0" y="1011.0" font-size="38.41" fill="#444" font-weight="700" textLength="140.0" lengthAdjust="spacingAndGlyphs">Reflexo</text>
<path d="M3109,1065 L3123,1077 L3109,1089 Z" fill="none" stroke="#777" stroke-width="2" />
<text x="3150.0" y="1094.0" font-size="38.41" fill="#444" font-weight="700" textLength="104.0" lengthAdjust="spacingAndGlyphs">Brilho</text>
<path d="M3109,1146 L3123,1158 L3109,1170 Z" fill="none" stroke="#777" stroke-width="2" />
<text x="3150.0" y="1175.0" font-size="38.41" fill="#444" font-weight="700" textLength="252.0" lengthAdjust="spacingAndGlyphs">Bordas Suaves</text>
<path d="M3109,1227 L3123,1239 L3109,1251 Z" fill="none" stroke="#777" stroke-width="2" />
<text x="3150.0" y="1256.0" font-size="38.41" fill="#444" font-weight="700" textLength="205.0" lengthAdjust="spacingAndGlyphs">Formato 3D</text>
<rect x="3089" y="1297.5" width="732" height="48.5" fill="#c6c6c6" />
<path d="M3106,1332 L3124,1332 L3124,1314 Z" fill="#2f6bc4" />
<text x="3150.0" y="1336.0" font-size="38.41" fill="#444" font-weight="700" textLength="196.0" lengthAdjust="spacingAndGlyphs">Rotação 3D</text>
<text x="3150.0" y="1445.0" font-size="39.11" fill="#444" textLength="221.0" lengthAdjust="spacingAndGlyphs">Predefinições</text>
<rect x="3150" y="1450.5" width="20" height="2.5" fill="#444" />
<rect x="3635.0" y="1368.0" width="185" height="130" fill="#ffffff" stroke="#c6c6c6" stroke-width="2" />
<rect x="3672" y="1391" width="76" height="76" rx="7" fill="#e6e6e6" stroke="#c6c6c6" stroke-width="2"/>
<path d="M3780,1424 L3803,1424 L3791.5,1437 Z" fill="#666" />
<text x="3150.0" y="1572.0" font-size="39.11" fill="#444" textLength="165.0" lengthAdjust="spacingAndGlyphs">Rotação X</text>
<rect x="3295" y="1577" width="20" height="2.5" fill="#444" />
<text x="3150.0" y="1666.0" font-size="39.11" fill="#444" textLength="165.0" lengthAdjust="spacingAndGlyphs">Rotação Y</text>
<rect x="3295" y="1671" width="20" height="2.5" fill="#444" />
<text x="3150.0" y="1759.0" font-size="39.11" fill="#444" textLength="165.0" lengthAdjust="spacingAndGlyphs">Rotação Z</text>
<rect x="3295" y="1764" width="20" height="2.5" fill="#444" />
<rect x="3388.0" y="1524.0" width="225.0" height="61.5" fill="#ffffff" stroke="#2f6bc4" stroke-width="3" />
<text x="3410.0" y="1569.0" font-size="37.71" fill="#262626" textLength="66.0" lengthAdjust="spacingAndGlyphs">180°</text>
<rect x="3477" y="1532" width="3" height="40" fill="#000" />
<path d="M3578,1542 L3594,1542 L3586.0,1534 Z" fill="#6d6d6d" />
<path d="M3578,1565 L3594,1565 L3586.0,1573 Z" fill="#6d6d6d" />
<rect x="3388.0" y="1617.0" width="225.5" height="62.5" fill="#ffffff" stroke="#ababab" stroke-width="2" />
<text x="3410.0" y="1661.8" font-size="37.71" fill="#262626">0°</text>
<path d="M3578.5,1637 L3594.5,1637 L3586.5,1629 Z" fill="#6d6d6d" />
<path d="M3578.5,1659.5 L3594.5,1659.5 L3586.5,1667.5 Z" fill="#6d6d6d" />
<rect x="3388.0" y="1712.0" width="225.5" height="61.5" fill="#ffffff" stroke="#ababab" stroke-width="2" />
<text x="3410.0" y="1756.2" font-size="37.71" fill="#262626">0°</text>
<path d="M3578.5,1732 L3594.5,1732 L3586.5,1724 Z" fill="#6d6d6d" />
<path d="M3578.5,1753.5 L3594.5,1753.5 L3586.5,1761.5 Z" fill="#6d6d6d" />
<rect x="3388.0" y="1806.0" width="225.5" height="60.5" fill="#ececec" stroke="#dadada" stroke-width="2" />
<text x="3410.0" y="1849.8" font-size="37.71" fill="#b4b4b4">0°</text>
<path d="M3578.5,1826 L3594.5,1826 L3586.5,1818 Z" fill="#c6c6c6" />
<path d="M3578.5,1846.5 L3594.5,1846.5 L3586.5,1854.5 Z" fill="#c6c6c6" />
<text x="3150.0" y="1852.0" font-size="39.11" fill="#a6a6a6" textLength="185.0" lengthAdjust="spacingAndGlyphs">Perspectiva</text>
<rect x="3175" y="1858" width="20" height="2.5" fill="#a6a6a6" />
<rect x="3644.0" y="1520.5" width="72.5" height="71.0" fill="#fcfcfc" stroke="#ababab" stroke-width="2" />
<rect x="3747.0" y="1520.5" width="72.5" height="71.0" fill="#fcfcfc" stroke="#ababab" stroke-width="2" />
<rect x="3644.0" y="1614.0" width="72.5" height="71.5" fill="#fcfcfc" stroke="#ababab" stroke-width="2" />
<rect x="3747.0" y="1614.0" width="72.5" height="71.5" fill="#fcfcfc" stroke="#ababab" stroke-width="2" />
<rect x="3644.0" y="1708.0" width="72.5" height="71.5" fill="#fcfcfc" stroke="#ababab" stroke-width="2" />
<rect x="3747.0" y="1708.0" width="72.5" height="71.5" fill="#fcfcfc" stroke="#ababab" stroke-width="2" />
<rect x="3644.5" y="1803.0" width="71.0" height="68.5" fill="#fbfbfb" stroke="#ebebeb" stroke-width="2" />
<rect x="3747.5" y="1803.0" width="71.0" height="68.5" fill="#fbfbfb" stroke="#ebebeb" stroke-width="2" />
<line x1="3668.5" y1="1531" x2="3668.5" y2="1555" stroke="#777" stroke-width="2" />
<line x1="3668.5" y1="1571" x2="3668.5" y2="1578" stroke="#777" stroke-width="2" />
<path d="M3675,1541 L3682,1537.5" fill="none" stroke="#3f78c0" stroke-width="4" />
<path d="M3662,1541 C3656,1552 3660,1566 3688,1566" fill="none" stroke="#3f78c0" stroke-width="5.5" />
<path d="M3702,1566 L3687,1554 L3687,1578 Z" fill="#3f78c0" />
<line x1="3793.5" y1="1531" x2="3793.5" y2="1555" stroke="#777" stroke-width="2" />
<line x1="3793.5" y1="1571" x2="3793.5" y2="1578" stroke="#777" stroke-width="2" />
<path d="M3787,1541 L3780,1537.5" fill="none" stroke="#3f78c0" stroke-width="4" />
<path d="M3800,1541 C3806,1552 3802,1566 3774,1566" fill="none" stroke="#3f78c0" stroke-width="5.5" />
<path d="M3760,1566 L3775,1554 L3775,1578 Z" fill="#3f78c0" />
<line x1="3655" y1="1638.5" x2="3701" y2="1638.5" stroke="#777" stroke-width="2" />
<path d="M3674,1634 C3680,1627 3694,1628 3697,1650" fill="none" stroke="#3f78c0" stroke-width="5.5" />
<line x1="3671" y1="1644" x2="3671" y2="1660" stroke="#3f78c0" stroke-width="5.5" />
<path d="M3658.5,1653 L3671,1671.5 L3683,1653 Z" fill="#3f78c0" />
<line x1="3759" y1="1638.5" x2="3805" y2="1638.5" stroke="#777" stroke-width="2" />
<path d="M3760,1646 L3763,1640" fill="none" stroke="#3f78c0" stroke-width="4" />
<path d="M3772,1633 C3780,1626 3789,1632 3789,1650" fill="none" stroke="#3f78c0" stroke-width="5.5" />
<line x1="3789" y1="1644" x2="3789" y2="1660" stroke="#3f78c0" stroke-width="5.5" />
<path d="M3776.5,1653 L3789,1671.5 L3801,1653 Z" fill="#3f78c0" />
<circle cx="3683" cy="1740.5" r="5" fill="#e0e0e0" stroke="#666" stroke-width="2"/>
<path d="M3681.5,1724.5 A16.5,16.5 0 1 1 3670,1752" fill="none" stroke="#3f78c0" stroke-width="6" />
<path d="M3658,1743 L3676,1743 L3661,1762 Z" fill="#3f78c0" />
<circle cx="3777" cy="1740.5" r="5" fill="#e0e0e0" stroke="#666" stroke-width="2"/>
<path d="M3779,1724.5 A16.5,16.5 0 1 0 3790,1752" fill="none" stroke="#3f78c0" stroke-width="6" />
<path d="M3801.5,1743 L3784,1743 L3799,1762 Z" fill="#3f78c0" />
<path d="M3678,1819 L3699,1833 L3690.5,1833 L3686,1855 L3671,1855 L3667,1833 L3658,1833 Z" fill="#ababab" />
<path d="M3775,1819 L3789,1819 L3793,1842 L3802,1842 L3781.5,1855 L3761,1842 L3770.5,1842 Z" fill="#ababab" />
<rect x="3150.0" y="1902.0" width="38.5" height="37" fill="#ffffff" stroke="#b4b4b4" stroke-width="2" />
<text x="3206.0" y="1935.0" font-size="39.11" fill="#444" textLength="486.0" lengthAdjust="spacingAndGlyphs">Manter texto sem formatação</text>
<rect x="3206" y="1941" width="32" height="2.5" fill="#444" />
<text x="3150.0" y="2017.0" font-size="39.11" fill="#444" textLength="280.0" lengthAdjust="spacingAndGlyphs">Distância do solo</text>
<rect x="3150" y="2023" width="23" height="2.5" fill="#444" />
<rect x="3594.0" y="1974.0" width="226" height="61" fill="#ffffff" stroke="#ababab" stroke-width="2" />
<text x="3616.0" y="2018.0" font-size="37.71" fill="#262626">0 pt</text>
<path d="M3785,1994 L3801,1994 L3793.0,1986 Z" fill="#6d6d6d" />
<path d="M3785,2015 L3801,2015 L3793.0,2023 Z" fill="#6d6d6d" />
<rect x="3151.0" y="2058.0" width="199.5" height="75" fill="#ffffff" stroke="#adadad" stroke-width="2" />
<text x="3178.0" y="2108.0" font-size="39.11" fill="#262626" textLength="146.0" lengthAdjust="spacingAndGlyphs">Redefinir</text>
<rect x="3178" y="2113.5" width="21" height="2.5" fill="#262626" />
<rect x="3835" y="891" width="44" height="1196" fill="#ffffff" />
<rect x="3835.0" y="892.0" width="44" height="1194" fill="none" stroke="#b0b0b0" stroke-width="2" />
<line x1="3835" y1="937" x2="3879" y2="937" stroke="#b0b0b0" stroke-width="3" />
<path d="M3847,916 L3867,916 L3857.0,906 Z" fill="#666" />
<rect x="3835.0" y="2100.0" width="44" height="42" fill="#ffffff" stroke="#d0d0d0" stroke-width="2" />
<path d="M3847,2116 L3867,2116 L3857.0,2126 Z" fill="#666" />
<rect x="2993" y="1555.5" width="67" height="11.0" fill="#e3282e" />
<path d="M3058,1548 L3133,1561 L3058,1574 Z" fill="#e3282e" />
<rect x="3927" y="0" width="1" height="2275" fill="#1a1a1a" />
</svg>
</body></html>
